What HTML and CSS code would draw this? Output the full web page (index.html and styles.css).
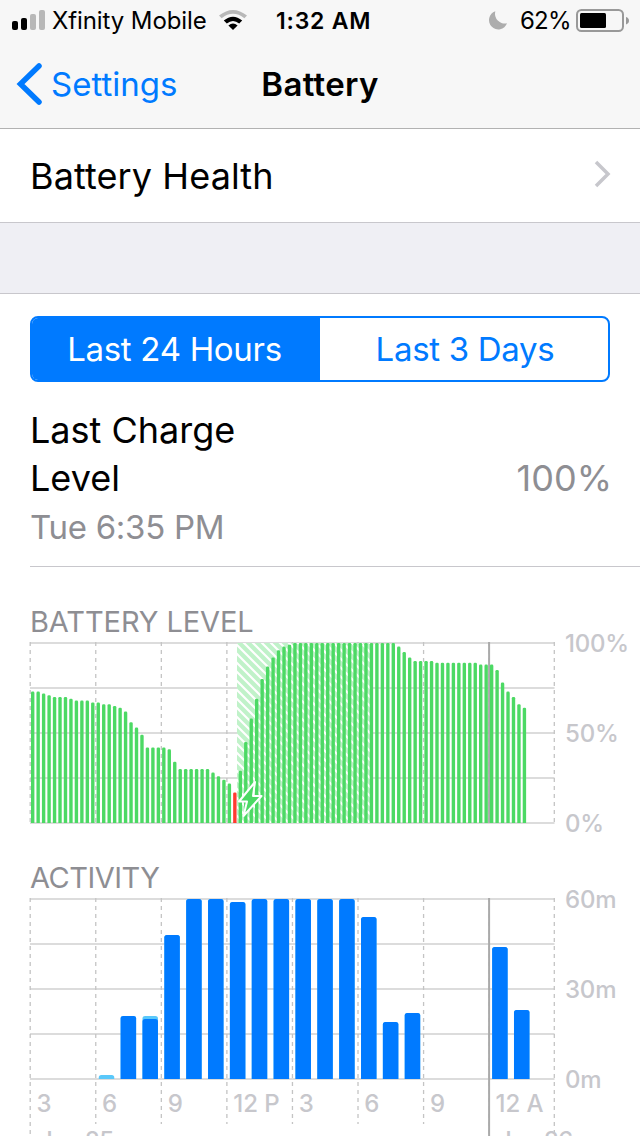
FILE: index.html
```html
<!DOCTYPE html>
<html lang="en">
<head>
	<meta charset="utf-8">
	<title>Battery</title>
	<link rel="stylesheet" href="styles.css">
</head>
<body>
	<header class="top">
		<div class="status">
			<svg class="signal" width="34" height="20" viewBox="0 0 34 20">
				<rect x="0" y="11" width="6" height="9" rx="2"/>
				<rect x="9" y="8" width="6" height="12" rx="2"/>
				<rect class="dim" x="18" y="4" width="6" height="16" rx="2"/>
				<rect class="dim" x="27" y="0" width="6" height="20" rx="2"/>
			</svg>
			<span class="carrier">Xfinity Mobile</span>
			<svg class="wifi" width="28" height="20" viewBox="0 0 28 20">
				<path class="dim" d="M0 5.600Q14-5.600 28 5.600L25.400 8.200Q14-.6 2.600 8.200z"/>
				<path d="M4.800 10.600Q14 3 23.200 10.600L20.200 13.600Q14 8.200 7.800 13.600z"/>
				<path d="M9.400 15.500Q14 11.500 18.600 15.500L14 20z"/>
			</svg>
			<span class="clock">1:32 AM</span>
			<svg class="moon" width="18" height="19" viewBox="0 0 18 19">
				<path d="M6.300.3A9.300 9.300 0 1 0 18 12.300A9.800 9.800 0 0 1 6.300.3z"/>
			</svg>
			<span class="percent">62%</span>
			<svg class="cell" width="54" height="24" viewBox="0 0 54 24">
				<rect class="shell" x="1" y="1" width="46" height="21" rx="4.5"/>
				<rect x="4" y="4" width="26" height="15" rx="1.5"/>
				<path class="tip" d="M50 8q3 1 3 3.700t-3 3.700z"/>
			</svg>
		</div>
		<div class="nav">
			<a class="back">
				<svg width="25" height="42" viewBox="0 0 25 42"><path d="M22 3L3.500 21L22 39"/></svg>
				<span>Settings</span>
			</a>
			<h1>Battery</h1>
		</div>
	</header>

	<div class="row">
		<span>Battery Health</span>
		<svg width="17" height="28" viewBox="0 0 17 28"><path d="M2 2L14 14L2 26"/></svg>
	</div>
	<div class="spacer"></div>

	<div class="panel">
		<div class="segments">
			<div class="segment on"><span>Last 24 Hours</span></div>
			<div class="segment"><span>Last 3 Days</span></div>
		</div>

		<div class="charge">
			<div class="charge-name">
				<div class="charge-title">Last Charge<br>Level</div>
				<div class="charge-time">Tue 6:35 PM</div>
			</div>
			<div class="charge-value">100%</div>
		</div>

		<section class="level">
			<h2>BATTERY LEVEL</h2>
			<div class="chart">
				<svg id="level" width="527" height="182"></svg>
				<div class="scale"><span>100%</span><span>50%</span><span>0%</span></div>
			</div>
		</section>

		<section class="activity">
			<h2>ACTIVITY</h2>
			<div class="chart">
				<svg id="activity" width="527" height="240"></svg>
				<div class="scale"><span>60m</span><span>30m</span><span>0m</span></div>
			</div>
		</section>
	</div>
	<script src="charts.js"></script>
</body>
</html>
```
FILE: styles.css
```css
* {
	box-sizing: border-box;
}
body {
	margin: 0;
	height: 1136px;
	overflow: hidden;
	background: #fff;
	color: #000;
	font-family: Inter, "Liberation Sans", sans-serif;
}
svg {
	display: block;
	flex: none;
	overflow: visible;
}
h1, h2 {
	margin: 0;
}
span {
	white-space: nowrap;
}

/* status bar and title */
.top {
	height: 129px;
	background: #f7f7f7;
	border-bottom: 1px solid #b2b2b2;
}
.status {
	display: flex;
	align-items: center;
	height: 41px;
	padding-left: 12px;
	font-size: 24px;
}
.signal, .wifi {
	margin-bottom: 1px;
}
.dim {
	fill: #b8b8b8;
}
.carrier {
	width: 167px;
	margin-left: 6px;
	letter-spacing: -0.1px;
}
.clock {
	width: 213px;
	margin-left: 29px;
	font-weight: 600;
	font-size: 23px;
	letter-spacing: 0.8px;
}
.moon {
	fill: #adadad;
}
.percent {
	width: 56px;
	margin-left: 13px;
	letter-spacing: -0.8px;
}
.shell {
	fill: none;
	stroke: #999;
	stroke-width: 2;
}
.tip {
	fill: #999;
}
.nav {
	display: grid;
	grid-template-columns: 1fr auto 1fr;
	align-items: center;
	height: 86px;
}
.back {
	display: flex;
	align-items: center;
	gap: 9px;
	padding-left: 17px;
	color: #007aff;
	font-size: 33px;
}
.back path {
	fill: none;
	stroke: #007aff;
	stroke-width: 5.5;
	stroke-linecap: round;
}
h1 {
	font-size: 33px;
	font-weight: 600;
	letter-spacing: 0.3px;
}

.row {
	display: flex;
	align-items: center;
	justify-content: space-between;
	height: 94px;
	padding: 0 29px 0 30px;
	border-bottom: 1px solid #c8c7cc;
	font-size: 36px;
	letter-spacing: 0.1px;
}
.row svg {
	margin-bottom: 3px;
}
.row path {
	fill: none;
	stroke: #c7c7cc;
	stroke-width: 3.5;
}
.spacer {
	height: 71px;
	background: #efeff4;
	border-bottom: 1px solid #c8c7cc;
}

.panel {
	padding: 22px 0 0 30px;
}
.segments {
	display: grid;
	grid-template-columns: 1fr 1fr;
	width: 580px;
	height: 66px;
	border: 2px solid #007aff;
	border-radius: 8px;
	overflow: hidden;
	color: #007aff;
	font-size: 33px;
	letter-spacing: -0.3px;
}
.segment {
	display: flex;
	align-items: center;
	justify-content: center;
}
.on {
	padding-right: 3px;
	background: #007aff;
	color: #fff;
}
.segment:last-child {
	padding-left: 2px;
}
.charge {
	display: flex;
	justify-content: space-between;
	height: 185px;
	padding: 24px 28px 0 0;
	border-bottom: 1px solid #c8c7cc;
}
.charge-title {
	font-size: 36px;
	line-height: 48px;
}
.charge-time {
	color: #8e8e93;
	font-size: 33px;
	line-height: 50px;
	letter-spacing: -0.3px;
}
.charge-value {
	margin-top: 48px;
	color: #8e8e93;
	font-size: 36px;
	line-height: 48px;
}

/* charts */
h2 {
	height: 40px;
	color: #8e8e93;
	font-size: 29px;
	font-weight: 400;
	line-height: 40px;
	letter-spacing: -0.1px;
}
.level {
	padding-top: 35px;
}
.activity {
	padding-top: 20px;
}
.activity h2 {
	letter-spacing: -0.5px;
}
.chart {
	display: flex;
	gap: 8px;
}
.scale {
	display: flex;
	flex-direction: column;
	justify-content: space-between;
	height: 210px;
	margin-top: -13px;
	margin-bottom: -1px;
	color: #c7c7cc;
	font-size: 24px;
	font-weight: 500;
	line-height: 30px;
	letter-spacing: -0.2px;
}
.grid {
	stroke: #dcdcdc;
	stroke-width: 2;
}
.tick {
	stroke: #c4c4c4;
	stroke-width: 1.3;
	stroke-dasharray: 4 4;
}
.midnight {
	stroke: #aaa;
	stroke-width: 2;
}
.good {
	fill: #4cd964;
}
.low {
	fill: #ff3b30;
}
.bolt {
	fill: #4cd964;
	stroke: #fff;
	stroke-width: 2;
	stroke-linejoin: round;
}
.screen-on {
	fill: #007aff;
}
.screen-off {
	fill: #5ac8fa;
}
.hour {
	fill: #c7c7cc;
	font-size: 24px;
	font-weight: 500;
}
```
FILE: charts.js
```js
var W = 524.5;
var H = 180;

// one value per quarter hour, in percent
var levels = [
	73, 73, 72, 71, 70, 70, 70, 69, 68, 68, 68, 67, 67, 66, 66, 65,
	64, 62, 56, 53, 49, 42, 42, 42, 42, 41, 34, 30, 30, 30, 30, 30,
	30, 28, 26, 24, 22, 17, 29, 45, 58, 69, 80, 87, 92, 96, 98, 99,
	100, 100, 100, 100, 100, 100, 100, 100, 100, 100, 100, 100, 100, 100, 100, 100,
	100, 100, 100, 98, 95, 92, 90, 90, 90, 90, 89, 89, 89, 89, 89, 89,
	89, 89, 88, 88, 88, 85, 78, 73, 70, 66, 64
];

// minutes per hour: screen on, total
var usage = [
	[0, 0], [0, 0], [0, 0], [0, 1.3], [21, 21], [20, 21], [48, 48], [60, 60],
	[60, 60], [59, 59], [60, 60], [60, 60], [60, 60], [60, 60], [60, 60], [54, 54],
	[19, 19], [22, 22], [0, 0], [0, 0], [0, 0], [44, 44], [23, 23]
];

function line(x1, y1, x2, y2, name) {
	return '<line class="' + name + '" x1="' + x1 + '" y1="' + y1 + '" x2="' + x2 + '" y2="' + y2 + '"/>';
}

function bar(x, w, h, r, name) {
	if (h <= 0) return '';
	return '<path class="' + name + '" d="M' + x + ' ' + (H + 1) + 'v' + (r - h) +
		'q0 ' + -r + ' ' + r + ' ' + -r + 'h' + (w - 2 * r) +
		'q' + r + ' 0 ' + r + ' ' + r + 'v' + (h - r) + 'z"/>';
}

function grid(ends) {
	var s = '';
	for (var i = 0; i <= 4; i++) {
		s += line(0, i * 45 + 1, W, i * 45 + 1, 'grid');
	}
	for (var j = 0; j <= 8; j++) {
		var x = j * W / 8 + (j == 8 ? -0.2 : 0.2);
		s += line(x, 0, x, ends[j], 'tick');
	}
	s += line(459.1, 0, 459.1, ends[7], 'midnight');
	return s;
}

function drawLevel() {
	var s = '<defs><pattern id="hatch" width="9" height="9" patternUnits="userSpaceOnUse" x="207" y="3">' +
		'<rect width="9" height="9" fill="#c0f2c9"/>' +
		'<path d="M-3-3L12 12M-3 6L3 12M6-3L12 3" stroke="#fff" stroke-width="2.200"/></pattern></defs>';
	s += grid([181, 181, 181, 181, 181, 181, 181, 181, 181]);
	s += '<rect x="207" y="1" width="134" height="180" fill="url(#hatch)"/>';
	for (var i = 0; i < levels.length; i++) {
		s += bar(1 + i * W / 96, 3.4, levels[i] * 1.8, 1.3, levels[i] < 20 ? 'low' : 'good');
	}
	s += '<path class="bolt" d="M225 140L209 159.500H217L213.500 174L231.500 154H223z"/>';
	document.getElementById('level').innerHTML = s;
}

function drawActivity() {
	var s = grid([240, 226, 226, 226, 226, 226, 226, 240, 240]);
	for (var i = 0; i < usage.length; i++) {
		var x = 3.2 + i * W / 24;
		s += bar(x, 15.5, usage[i][1] * 3, 2.5, 'screen-off');
		s += bar(x, 15.5, usage[i][0] * 3, 2.5, 'screen-on');
	}
	var hours = ['3', '6', '9', '12 P', '3', '6', '9', '12 A'];
	for (var j = 0; j < hours.length; j++) {
		s += '<text class="hour" x="' + (j * W / 8 + 6.5) + '" y="214">' + hours[j] + '</text>';
	}
	// dates run off the bottom of the screen
	s += '<text class="hour" x="9" y="251" textLength="75">Jun 25</text>';
	s += '<text class="hour" x="468" y="251" textLength="75">Jun 26</text>';
	document.getElementById('activity').innerHTML = s;
}

drawLevel();
drawActivity();
```
